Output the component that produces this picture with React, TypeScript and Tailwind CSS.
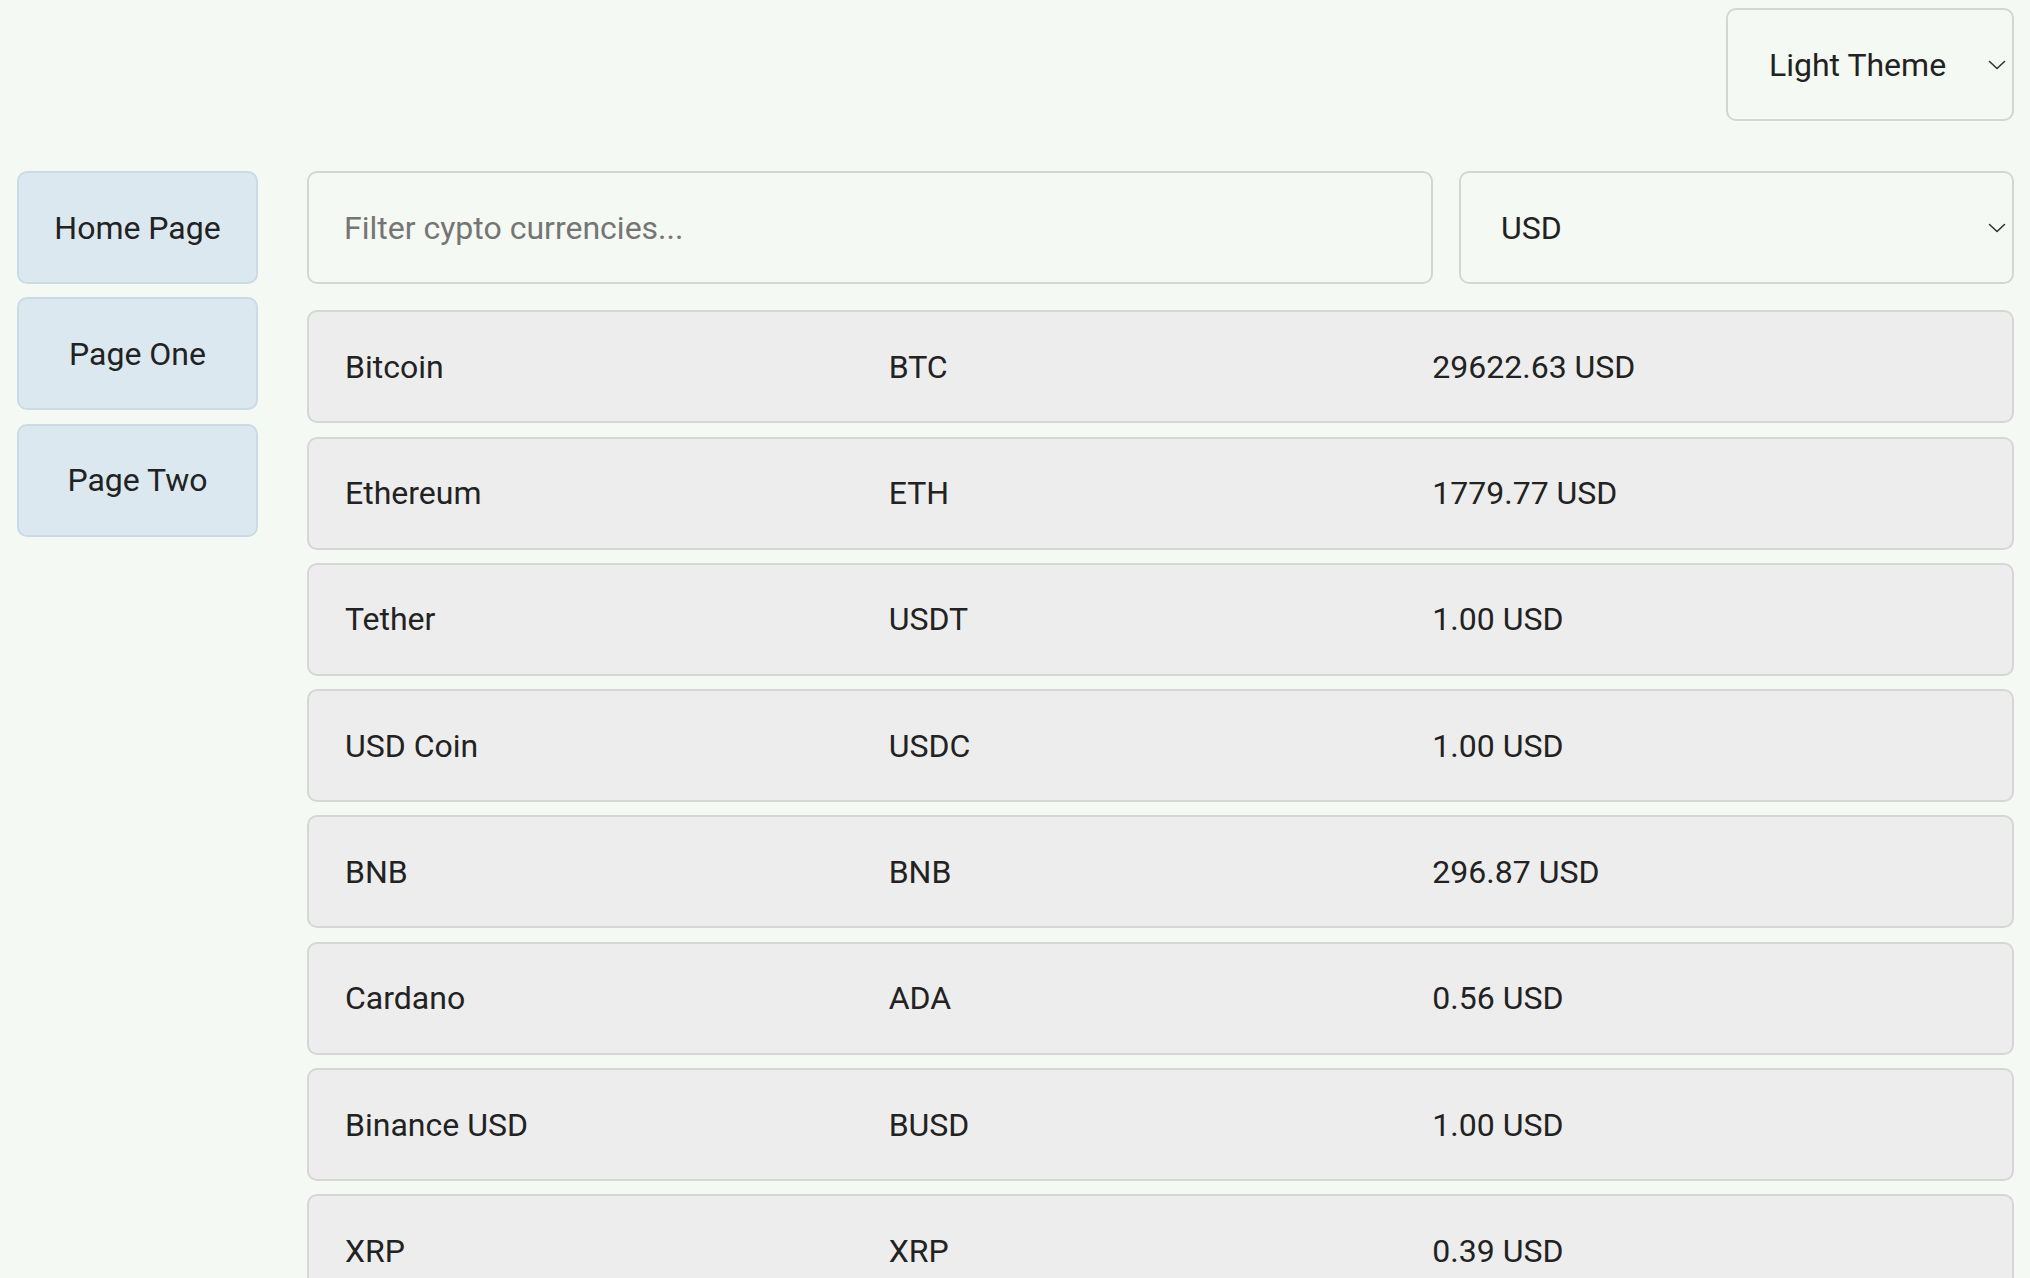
import { useState } from 'react';

const coins = [
  { name: 'Bitcoin', symbol: 'BTC', price: '29622.63' },
  { name: 'Ethereum', symbol: 'ETH', price: '1779.77' },
  { name: 'Tether', symbol: 'USDT', price: '1.00' },
  { name: 'USD Coin', symbol: 'USDC', price: '1.00' },
  { name: 'BNB', symbol: 'BNB', price: '296.87' },
  { name: 'Cardano', symbol: 'ADA', price: '0.56' },
  { name: 'Binance USD', symbol: 'BUSD', price: '1.00' },
  { name: 'XRP', symbol: 'XRP', price: '0.39' },
];

const Chevron = () => (
  <svg
    className="pointer-events-none absolute right-[8px] top-1/2 -translate-y-1/2"
    width="18"
    height="10"
    viewBox="0 0 18 10"
    fill="none"
  >
    <path d="M1.5 1.5 L9 8.5 L16.5 1.5" stroke="#333" strokeWidth="1.6" strokeLinecap="round" strokeLinejoin="round" />
  </svg>
);

const App = () => {
  const [filter, setFilter] = useState('');
  const [currency, setCurrency] = useState('USD');
  const [theme, setTheme] = useState('light');

  const shown = coins.filter((c) => c.name.toLowerCase().includes(filter.toLowerCase()));

  return (
    <div className="h-screen overflow-hidden bg-[#f5f9f3] font-['Roboto','Liberation_Sans',sans-serif] text-[32px] text-[#222]">
      <header className="flex justify-end pt-[8px] pr-[16px]">
        <div className="relative w-[288px] h-[113px]">
          <select
            value={theme}
            onChange={(e) => setTheme(e.target.value)}
            className="appearance-none w-full h-full pl-[41px] rounded-[10px] border-2 border-[#d4d6d3] bg-[#f5f9f3] outline-none"
          >
            <option value="light">Light Theme</option>
            <option value="dark">Dark Theme</option>
          </select>
          <Chevron />
        </div>
      </header>

      <div className="flex mt-[50px] pl-[17px] pr-[16px] gap-[49px]">
        <nav className="w-[241px] flex flex-col gap-[13.3px]">
          {['Home Page', 'Page One', 'Page Two'].map((label) => (
            <button
              key={label}
              className="h-[113px] rounded-[10px] border-2 border-[#cadbe5] bg-[#dce8f0] text-[#222]"
            >
              {label}
            </button>
          ))}
        </nav>

        <main className="flex-1 flex flex-col gap-[13.3px]">
          <div className="flex gap-[26px] mb-[13px]">
            <input
              value={filter}
              onChange={(e) => setFilter(e.target.value)}
              placeholder="Filter cypto currencies..."
              className="flex-1 h-[113px] px-[35px] rounded-[10px] border-2 border-[#d4d6d3] bg-[#f5f9f3] outline-none placeholder:text-[#757575]"
            />
            <div className="relative w-[555px] h-[113px]">
              <select
                value={currency}
                onChange={(e) => setCurrency(e.target.value)}
                className="appearance-none w-full h-full pl-[40px] rounded-[10px] border-2 border-[#d4d6d3] bg-[#f5f9f3] outline-none"
              >
                <option>USD</option>
                <option>EUR</option>
                <option>GBP</option>
              </select>
              <Chevron />
            </div>
          </div>

          {shown.map((coin) => (
            <div
              key={coin.symbol}
              className="h-[113px] shrink-0 grid grid-cols-3 items-center px-[36px] rounded-[10px] border-2 border-[#d6d6d6] bg-[#ededed]"
            >
              <span>{coin.name}</span>
              <span>{coin.symbol}</span>
              <span>
                {coin.price} {currency}
              </span>
            </div>
          ))}
        </main>
      </div>
    </div>
  );
};

export default App;
